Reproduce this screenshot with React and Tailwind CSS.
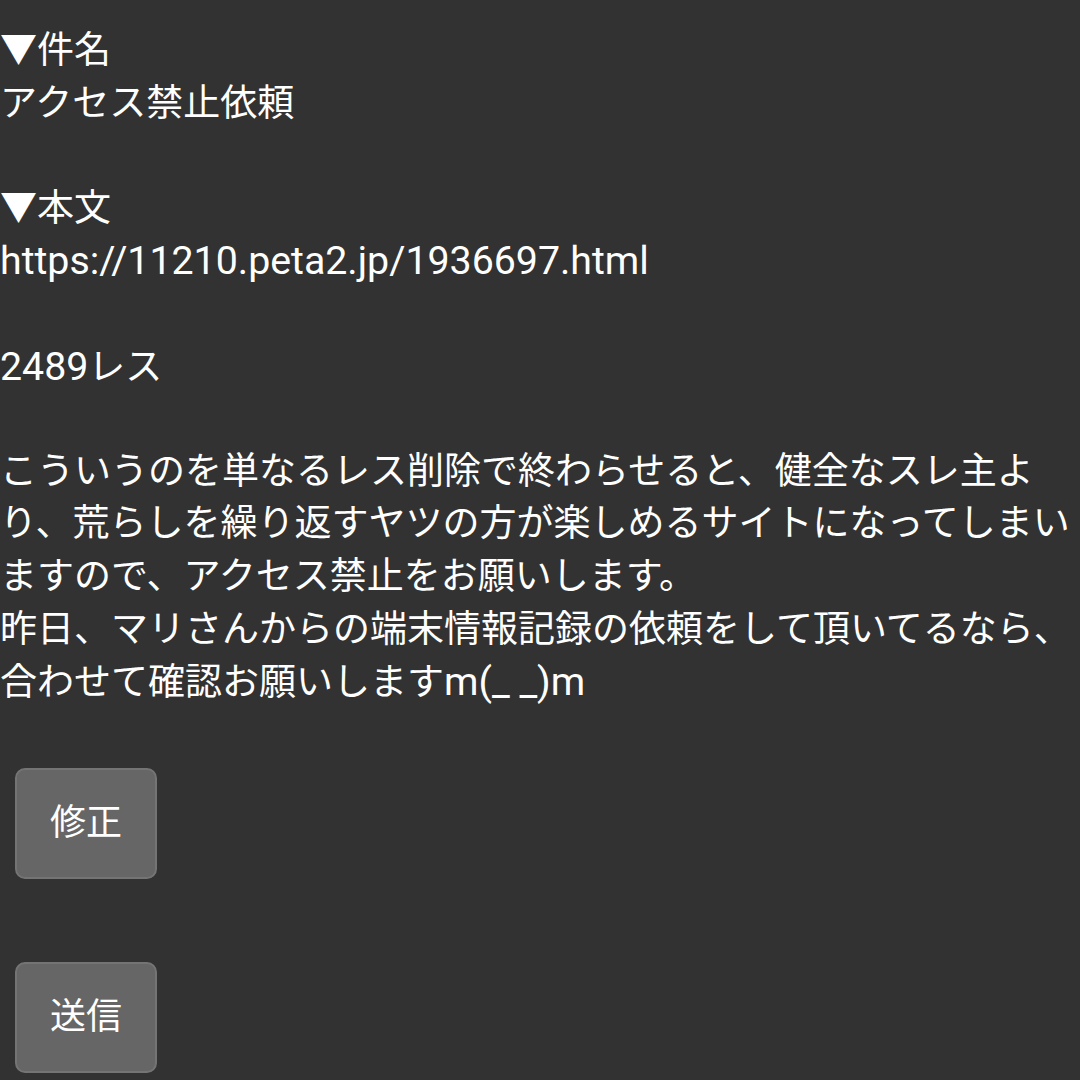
import React from 'react';

// Latin runs render a bit larger than the CJK ones in the reference
const L = ({ children }) => <span className="text-[39.3px] font-normal">{children}</span>;

const lines = [
  '▼件名',
  'アクセス禁止依頼',
  '',
  '▼本文',
  <L>https://11210.peta2.jp/1936697.html</L>,
  '',
  <><L>2489</L>レス</>,
  '',
  'こういうのを単なるレス削除で終わらせると、健全なスレ主よ',
  'り、荒らしを繰り返すヤツの方が楽しめるサイトになってしまい',
  'ますので、アクセス禁止をお願いします。',
  '昨日、マリさんからの端末情報記録の依頼をして頂いてるなら、',
  <>合わせて確認お願いします<L>m(_ _)m</L></>,
];

const App = () => {
  return (
    <div
      className="min-h-screen w-[1080px] bg-[#323232] text-white pt-[25px]"
      style={{ fontFamily: 'Roboto, "Noto Sans CJK JP", sans-serif' }}
    >
      <div className="text-[37px] leading-[52.6px] whitespace-pre">
        {lines.map((line, i) => (
          <div key={i} className="h-[52.6px]">{line}</div>
        ))}
      </div>

      <div className="flex flex-col items-start gap-[83px] pl-[15px] mt-[59px]">
        <button className="w-[142px] h-[111px] rounded-[10px] bg-[#666666] border-2 border-[#747474] text-[36px] text-white">
          修正
        </button>
        <button className="w-[142px] h-[111px] rounded-[10px] bg-[#666666] border-2 border-[#747474] text-[36px] text-white">
          送信
        </button>
      </div>
    </div>
  );
};

export default App;
